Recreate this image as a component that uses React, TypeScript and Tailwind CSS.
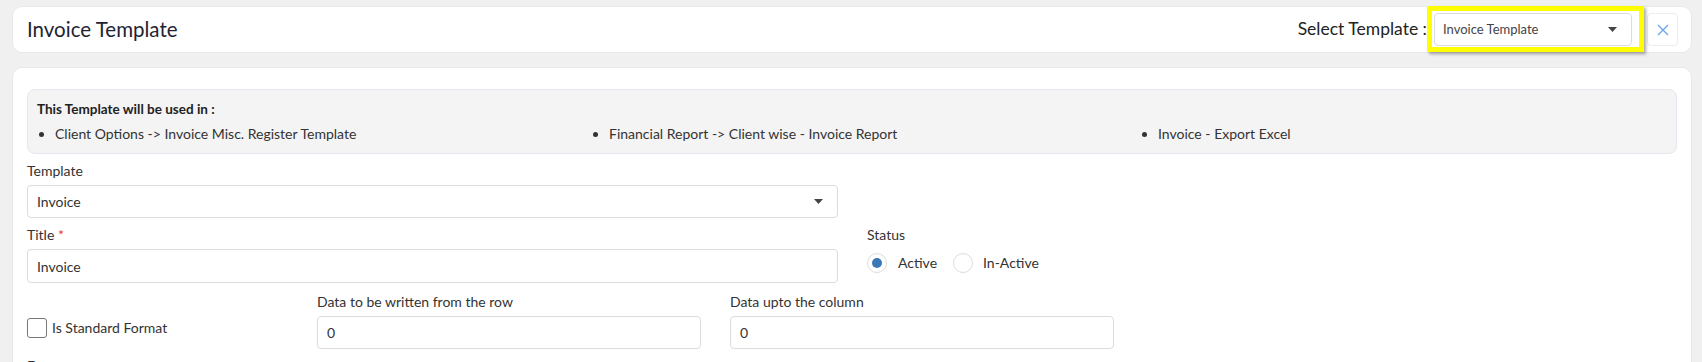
import React from "react";

function Caret() {
  return (
    <svg width="9" height="5" viewBox="0 0 9 5" className="shrink-0">
      <path d="M0 0 L9 0 L4.5 5 Z" fill="#444" />
    </svg>
  );
}

export default function App() {
  return (
    <div className="h-[362px] overflow-hidden bg-[#f0f0f0] pl-[12px] pr-[10px] pt-[6px] font-['Lato',sans-serif] text-[#333]">
      {/* Header */}
      <div className="flex h-[47px] items-center justify-between rounded-[10px] border border-[#e8e8ee] bg-white pl-[14px] pr-[13px]">
        <div className="text-[20.5px] text-[#1f2433]">Invoice Template</div>
        <div className="flex items-center">
          <span className="mr-[7px] text-[17.5px] text-[#222]">Select Template :</span>
          <div className="relative">
            <div className="flex h-[33px] w-[198px] items-center justify-between rounded-[4px] border border-[#dcdcdc] bg-white pl-[8px] pr-[14px] text-[13px] text-[#444]">
              <span>Invoice Template</span>
              <Caret />
            </div>
            <div className="pointer-events-none absolute left-[-7px] top-[-7px] right-[-12px] bottom-[-6px] border-[5px] border-[#ffff00] shadow-[2px_2px_3px_rgba(0,0,0,0.35)]" />
          </div>
          <div className="ml-[15px] flex h-[33px] w-[31px] items-center justify-center rounded-[4px] border border-[#ebedf0] bg-white">
            <svg width="12" height="12" viewBox="0 0 12 12">
              <path d="M1 1 L11 11 M11 1 L1 11" stroke="#6fa3ef" strokeWidth="1.4" />
            </svg>
          </div>
        </div>
      </div>

      {/* Main card */}
      <div className="mt-[14px] h-[400px] rounded-[10px] border border-[#e8e8ee] bg-white px-[14px] pt-[21px]">
        <div className="h-[65px] rounded-[8px] border border-[#e6e6ee] bg-[#f4f4f4] pl-[9px] pt-[9px]">
          <div className="text-[13.5px] font-bold leading-[20px] text-[#222]">This Template will be used in :</div>
          <ul className="mt-[5px] flex list-disc pl-[18px] text-[14px] leading-[20px] text-[#333]">
            <li className="w-[554px]">Client Options -&gt; Invoice Misc. Register Template</li>
            <li className="w-[549px]">Financial Report -&gt; Client wise - Invoice Report</li>
            <li>Invoice - Export Excel</li>
          </ul>
        </div>

        {/* Template */}
        <div className="mt-[7px] w-[811px]">
          <div className="text-[14px] leading-[20px]">Template</div>
          <div className="mt-[4px] flex h-[33px] items-center justify-between rounded-[4px] border border-[#dcdcdc] pl-[9px] pr-[14px] text-[14px]">
            <span>Invoice</span>
            <Caret />
          </div>
        </div>

        {/* Title + Status */}
        <div className="mt-[7px] flex">
          <div className="w-[811px]">
            <div className="text-[14px] leading-[20px]">
              Title <span className="text-[#dc3545]">*</span>
            </div>
            <div className="mt-[4px] flex h-[34px] items-center rounded-[4px] border border-[#dcdcdc] pl-[9px] text-[14px]">
              Invoice
            </div>
          </div>
          <div className="ml-[29px]">
            <div className="text-[14px] leading-[20px]">Status</div>
            <div className="mt-[7px] flex items-center text-[14px]">
              <span className="flex h-[20px] w-[20px] items-center justify-center rounded-full border border-[#dcdcdc]">
                <span className="h-[10px] w-[10px] rounded-full bg-[#3a78b8]" />
              </span>
              <span className="ml-[11px]">Active</span>
              <span className="ml-[16px] h-[20px] w-[20px] rounded-full border border-[#dcdcdc]" />
              <span className="ml-[10px]">In-Active</span>
            </div>
          </div>
        </div>

        {/* Row 3 */}
        <div className="mt-[9px] flex items-start">
          <div className="mt-[25px] flex w-[290px] items-center text-[14px]">
            <span className="h-[20px] w-[20px] rounded-[3px] border border-[#777]" />
            <span className="ml-[5px]">Is Standard Format</span>
          </div>
          <div className="w-[384px]">
            <div className="text-[14px] leading-[20px]">Data to be written from the row</div>
            <div className="mt-[4px] flex h-[33px] items-center rounded-[4px] border border-[#dcdcdc] pl-[9px] text-[14px]">0</div>
          </div>
          <div className="ml-[29px] w-[384px]">
            <div className="text-[14px] leading-[20px]">Data upto the column</div>
            <div className="mt-[4px] flex h-[33px] items-center rounded-[4px] border border-[#dcdcdc] pl-[9px] text-[14px]">0</div>
          </div>
        </div>

        <div className="mt-[7px] text-[14px] leading-[20px]">Format</div>
      </div>
    </div>
  );
}
